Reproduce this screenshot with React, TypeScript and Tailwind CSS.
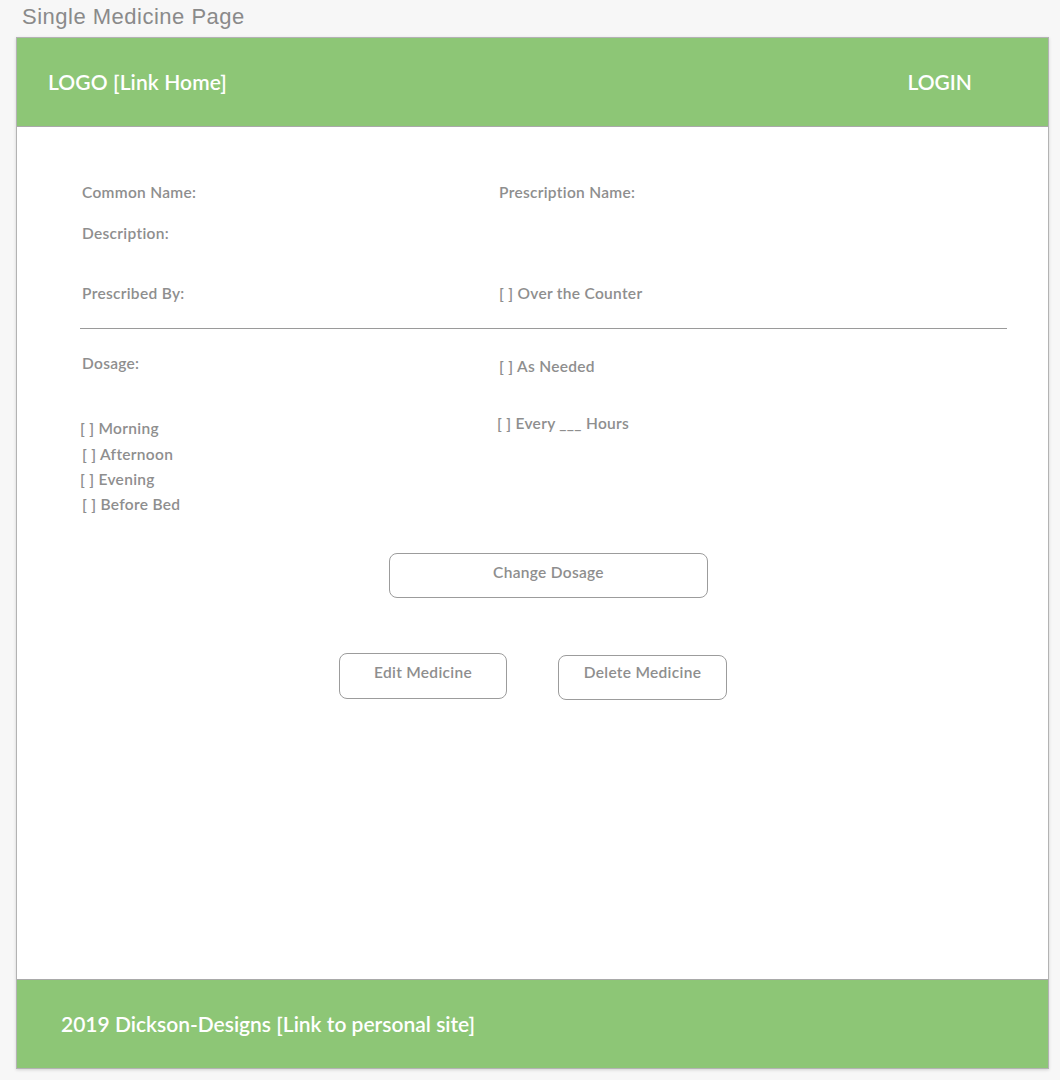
import React from "react";

const F = { fontFamily: "Lato, 'Open Sans', sans-serif" };

export default function App() {
  const label = "text-[15.5px] font-semibold text-[#8e8e8e] leading-5 tracking-[0.3px]";
  return (
    <div className="w-[1060px] h-[1080px] bg-[#f7f7f7] relative overflow-hidden" style={F}>
      <div className="pl-[22px] pt-[5px] h-[37px] text-[22px] leading-6 tracking-[0.5px] text-[#8a8a8a]" style={{ fontFamily: "'Liberation Sans', Arial, sans-serif" }}>
        Single Medicine Page
      </div>
      <div className="ml-[16px] w-[1033px] h-[1032px] border border-[#b3b3b3] bg-white flex flex-col shadow-[0_1px_3px_rgba(0,0,0,0.15)]">
        <header className="h-[89px] shrink-0 bg-[#8dc676] border-b border-[#a9a9a9] flex items-center justify-between pl-[31px] pr-[76px]">
          <span className="text-white text-[21px] font-semibold tracking-[0.1px]">LOGO [Link Home]</span>
          <span className="text-white text-[21px] font-semibold">LOGIN</span>
        </header>
        <main className="flex-1 pt-[55px]">
          <div className="pl-[65px] grid grid-cols-[417px_1fr]">
            <div>
              <div className={label}>Common Name:</div>
              <div className={`${label} mt-[21px]`}>Description:</div>
              <div className={`${label} mt-[40px]`}>Prescribed By:</div>
            </div>
            <div>
              <div className={label}>Prescription Name:</div>
              <div className={`${label} mt-[81px]`}>[ ] Over the Counter</div>
            </div>
          </div>
          <div className="ml-[63px] w-[927px] h-px bg-[#9a9a9a] mt-[25px]" />
          <div className="pl-[65px] grid grid-cols-[417px_1fr] mt-[24px]">
            <div>
              <div className={label}>Dosage:</div>
              <div className={`${label} mt-[45px] -ml-[2px]`}>[ ] Morning</div>
              <div className={`${label} mt-[6px]`}>[ ] Afternoon</div>
              <div className={`${label} mt-[5px] -ml-[2px]`}>[ ] Evening</div>
              <div className={`${label} mt-[5px]`}>[ ] Before Bed</div>
            </div>
            <div>
              <div className={`${label} mt-[3px]`}>[ ] As Needed</div>
              <div className={`${label} mt-[37px] -ml-[2px]`}>[ ] Every ___ Hours</div>
            </div>
          </div>
          <div className="mt-[39px] ml-[372px] w-[319px] h-[45px] border border-[#9c9c9c] rounded-[8px] flex justify-center pt-[8px]">
            <span className={label}>Change Dosage</span>
          </div>
          <div className="mt-[55px] flex items-start pl-[322px] gap-[51px]">
            <div className="w-[168px] h-[46px] border border-[#9c9c9c] rounded-[8px] flex justify-center pt-[8px]">
              <span className={label}>Edit Medicine</span>
            </div>
            <div className="mt-[2px] w-[169px] h-[45px] border border-[#9c9c9c] rounded-[8px] flex justify-center pt-[6px]">
              <span className={label}>Delete Medicine</span>
            </div>
          </div>
        </main>
        <footer className="h-[89px] shrink-0 bg-[#8dc676] border-t border-[#a9a9a9] flex items-center pl-[44px]">
          <span className="text-white text-[21px] font-semibold">2019 Dickson-Designs [Link to personal site]</span>
        </footer>
      </div>
    </div>
  );
}
